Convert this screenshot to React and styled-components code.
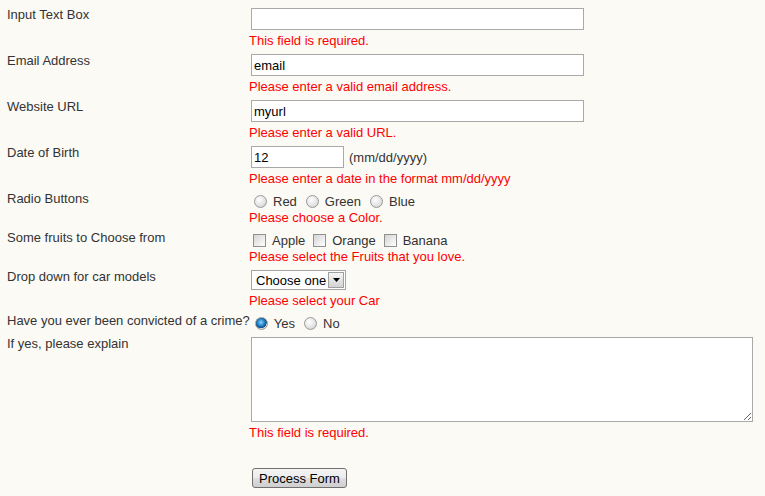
import React from "react";
import styled, { createGlobalStyle } from "styled-components";

const GlobalStyle = createGlobalStyle`
  html, body {
    margin: 0;
    padding: 0;
    background: #fbfaf5;
  }
  body {
    font-family: "Liberation Sans", Arial, sans-serif;
    font-size: 13px;
    color: #333;
  }
`;

const Form = styled.form`
  padding-top: 8px;
`;

const Row = styled.div`
  display: flex;
  align-items: flex-start;
  margin-bottom: ${(p) => (p.$gap === undefined ? 6 : p.$gap)}px;
`;

const Label = styled.label`
  flex: 0 0 242px;
  padding-left: 7px;
  line-height: 14px;
  white-space: nowrap;
  color: #333;
`;

const Field = styled.div`
  display: flex;
  flex-direction: column;
  align-items: flex-start;
`;

const TextInput = styled.input`
  box-sizing: border-box;
  width: ${(p) => p.$width}px;
  height: 22px;
  margin: 0 0 0 2px;
  padding: 0 2px;
  border: 1px solid #a9a9a9;
  background: #fff;
  font: 13px "Liberation Sans", Arial, sans-serif;
  color: #000;
  outline: none;
`;

const Error = styled.div`
  margin-top: ${(p) => (p.$top === undefined ? 3 : p.$top)}px;
  line-height: 15px;
  color: #ff0000;
  white-space: nowrap;
`;

const Inline = styled.div`
  display: flex;
  align-items: center;
  gap: 5px;
`;

const Hint = styled.span`
  color: #333;
`;

const Choices = styled.div`
  display: flex;
  align-items: center;
  height: 18px;
`;

const Option = styled.label`
  display: inline-flex;
  align-items: center;
  margin-right: 4px;
  line-height: 15px;
  color: #333;
`;

const Radio = styled.input.attrs({ type: "radio" })`
  appearance: none;
  box-sizing: border-box;
  width: 13px;
  height: 13px;
  margin: 0 6px 0 5px;
  border-radius: 50%;
  border: 1px solid #9a9a9a;
  background: radial-gradient(circle at 40% 35%, #ffffff 0%, #e4e4e4 55%, #c4c4c4 100%);

  &:checked {
    background:
      radial-gradient(circle at 45% 40%, #8fd3ff 0%, #2a8bd0 35%, #0b4d86 62%, transparent 66%),
      radial-gradient(circle at 40% 35%, #ffffff 0%, #e4e4e4 55%, #c4c4c4 100%);
  }
`;

const Checkbox = styled.input.attrs({ type: "checkbox" })`
  appearance: none;
  box-sizing: border-box;
  width: 13px;
  height: 13px;
  margin: 0 6px 0 4px;
  border: 1px solid #909090;
  background: linear-gradient(135deg, #d4d4d4 0%, #eeeeee 60%, #ffffff 100%);
`;

const SelectBox = styled.div`
  box-sizing: border-box;
  display: flex;
  align-items: center;
  width: 95px;
  height: 20px;
  margin-left: 2px;
  padding: 1px;
  border: 1px solid #a5a5a5;
  background: #fff;
`;

const Select = styled.select`
  appearance: none;
  flex: 1;
  min-width: 0;
  height: 100%;
  padding: 0 0 0 3px;
  border: none;
  background: transparent;
  font: 13px "Liberation Sans", Arial, sans-serif;
  color: #000;
  outline: none;
`;

const ArrowBox = styled.span`
  box-sizing: border-box;
  display: flex;
  align-items: center;
  justify-content: center;
  width: 16px;
  height: 16px;
  border: 1px solid #a0a0a0;
  background: linear-gradient(#f6f6f6, #d2d2d2);
`;

const TextArea = styled.textarea`
  box-sizing: border-box;
  width: 502px;
  height: 85px;
  margin: 0 0 0 2px;
  padding: 2px;
  border: 1px solid #a9a9a9;
  background: #fff;
  font: 13px "Liberation Sans", Arial, sans-serif;
  outline: none;
  display: block;
`;

const Button = styled.button`
  box-sizing: border-box;
  width: 95px;
  height: 20px;
  margin-left: 3px;
  padding: 0;
  border: 1px solid #707070;
  border-radius: 3px;
  background: linear-gradient(#f4f4f4 0%, #ececec 50%, #dedede 51%, #cfcfcf 100%);
  font: 13px "Liberation Sans", Arial, sans-serif;
  color: #000;
`;

export default function App() {
  return (
    <>
      <GlobalStyle />
      <Form onSubmit={(e) => e.preventDefault()}>
        <Row>
          <Label>Input Text Box</Label>
          <Field>
            <TextInput $width={333} defaultValue="" />
            <Error>This field is required.</Error>
          </Field>
        </Row>
        <Row>
          <Label>Email Address</Label>
          <Field>
            <TextInput $width={333} defaultValue="email" />
            <Error>Please enter a valid email address.</Error>
          </Field>
        </Row>
        <Row>
          <Label>Website URL</Label>
          <Field>
            <TextInput $width={333} defaultValue="myurl" />
            <Error>Please enter a valid URL.</Error>
          </Field>
        </Row>
        <Row>
          <Label>Date of Birth</Label>
          <Field>
            <Inline>
              <TextInput $width={93} defaultValue="12" />
              <Hint>(mm/dd/yyyy)</Hint>
            </Inline>
            <Error>Please enter a date in the format mm/dd/yyyy</Error>
          </Field>
        </Row>
        <Row>
          <Label>Radio Buttons</Label>
          <Field>
            <Choices>
              <Option><Radio name="color" />Red</Option>
              <Option><Radio name="color" />Green</Option>
              <Option><Radio name="color" />Blue</Option>
            </Choices>
            <Error $top={0}>Please choose a Color.</Error>
          </Field>
        </Row>
        <Row>
          <Label>Some fruits to Choose from</Label>
          <Field>
            <Choices>
              <Option><Checkbox />Apple</Option>
              <Option><Checkbox />Orange</Option>
              <Option><Checkbox />Banana</Option>
            </Choices>
            <Error $top={0}>Please select the Fruits that you love.</Error>
          </Field>
        </Row>
        <Row>
          <Label>Drop down for car models</Label>
          <Field>
            <SelectBox>
              <Select defaultValue="">
                <option value="">Choose one</option>
              </Select>
              <ArrowBox>
                <svg width="7" height="4" viewBox="0 0 7 4">
                  <path d="M0 0h7L3.5 4z" fill="#000" />
                </svg>
              </ArrowBox>
            </SelectBox>
            <Error>Please select your Car</Error>
          </Field>
        </Row>
        <Row $gap={5}>
          <Label>Have you ever been convicted of a crime?</Label>
          <Field>
            <Choices>
              <Option><Radio name="crime" defaultChecked />Yes</Option>
              <Option><Radio name="crime" />No</Option>
            </Choices>
          </Field>
        </Row>
        <Row $gap={28}>
          <Label>If yes, please explain</Label>
          <Field>
            <TextArea />
            <Error>This field is required.</Error>
          </Field>
        </Row>
        <Row $gap={0}>
          <Label />
          <Button type="submit">Process Form</Button>
        </Row>
      </Form>
    </>
  );
}
